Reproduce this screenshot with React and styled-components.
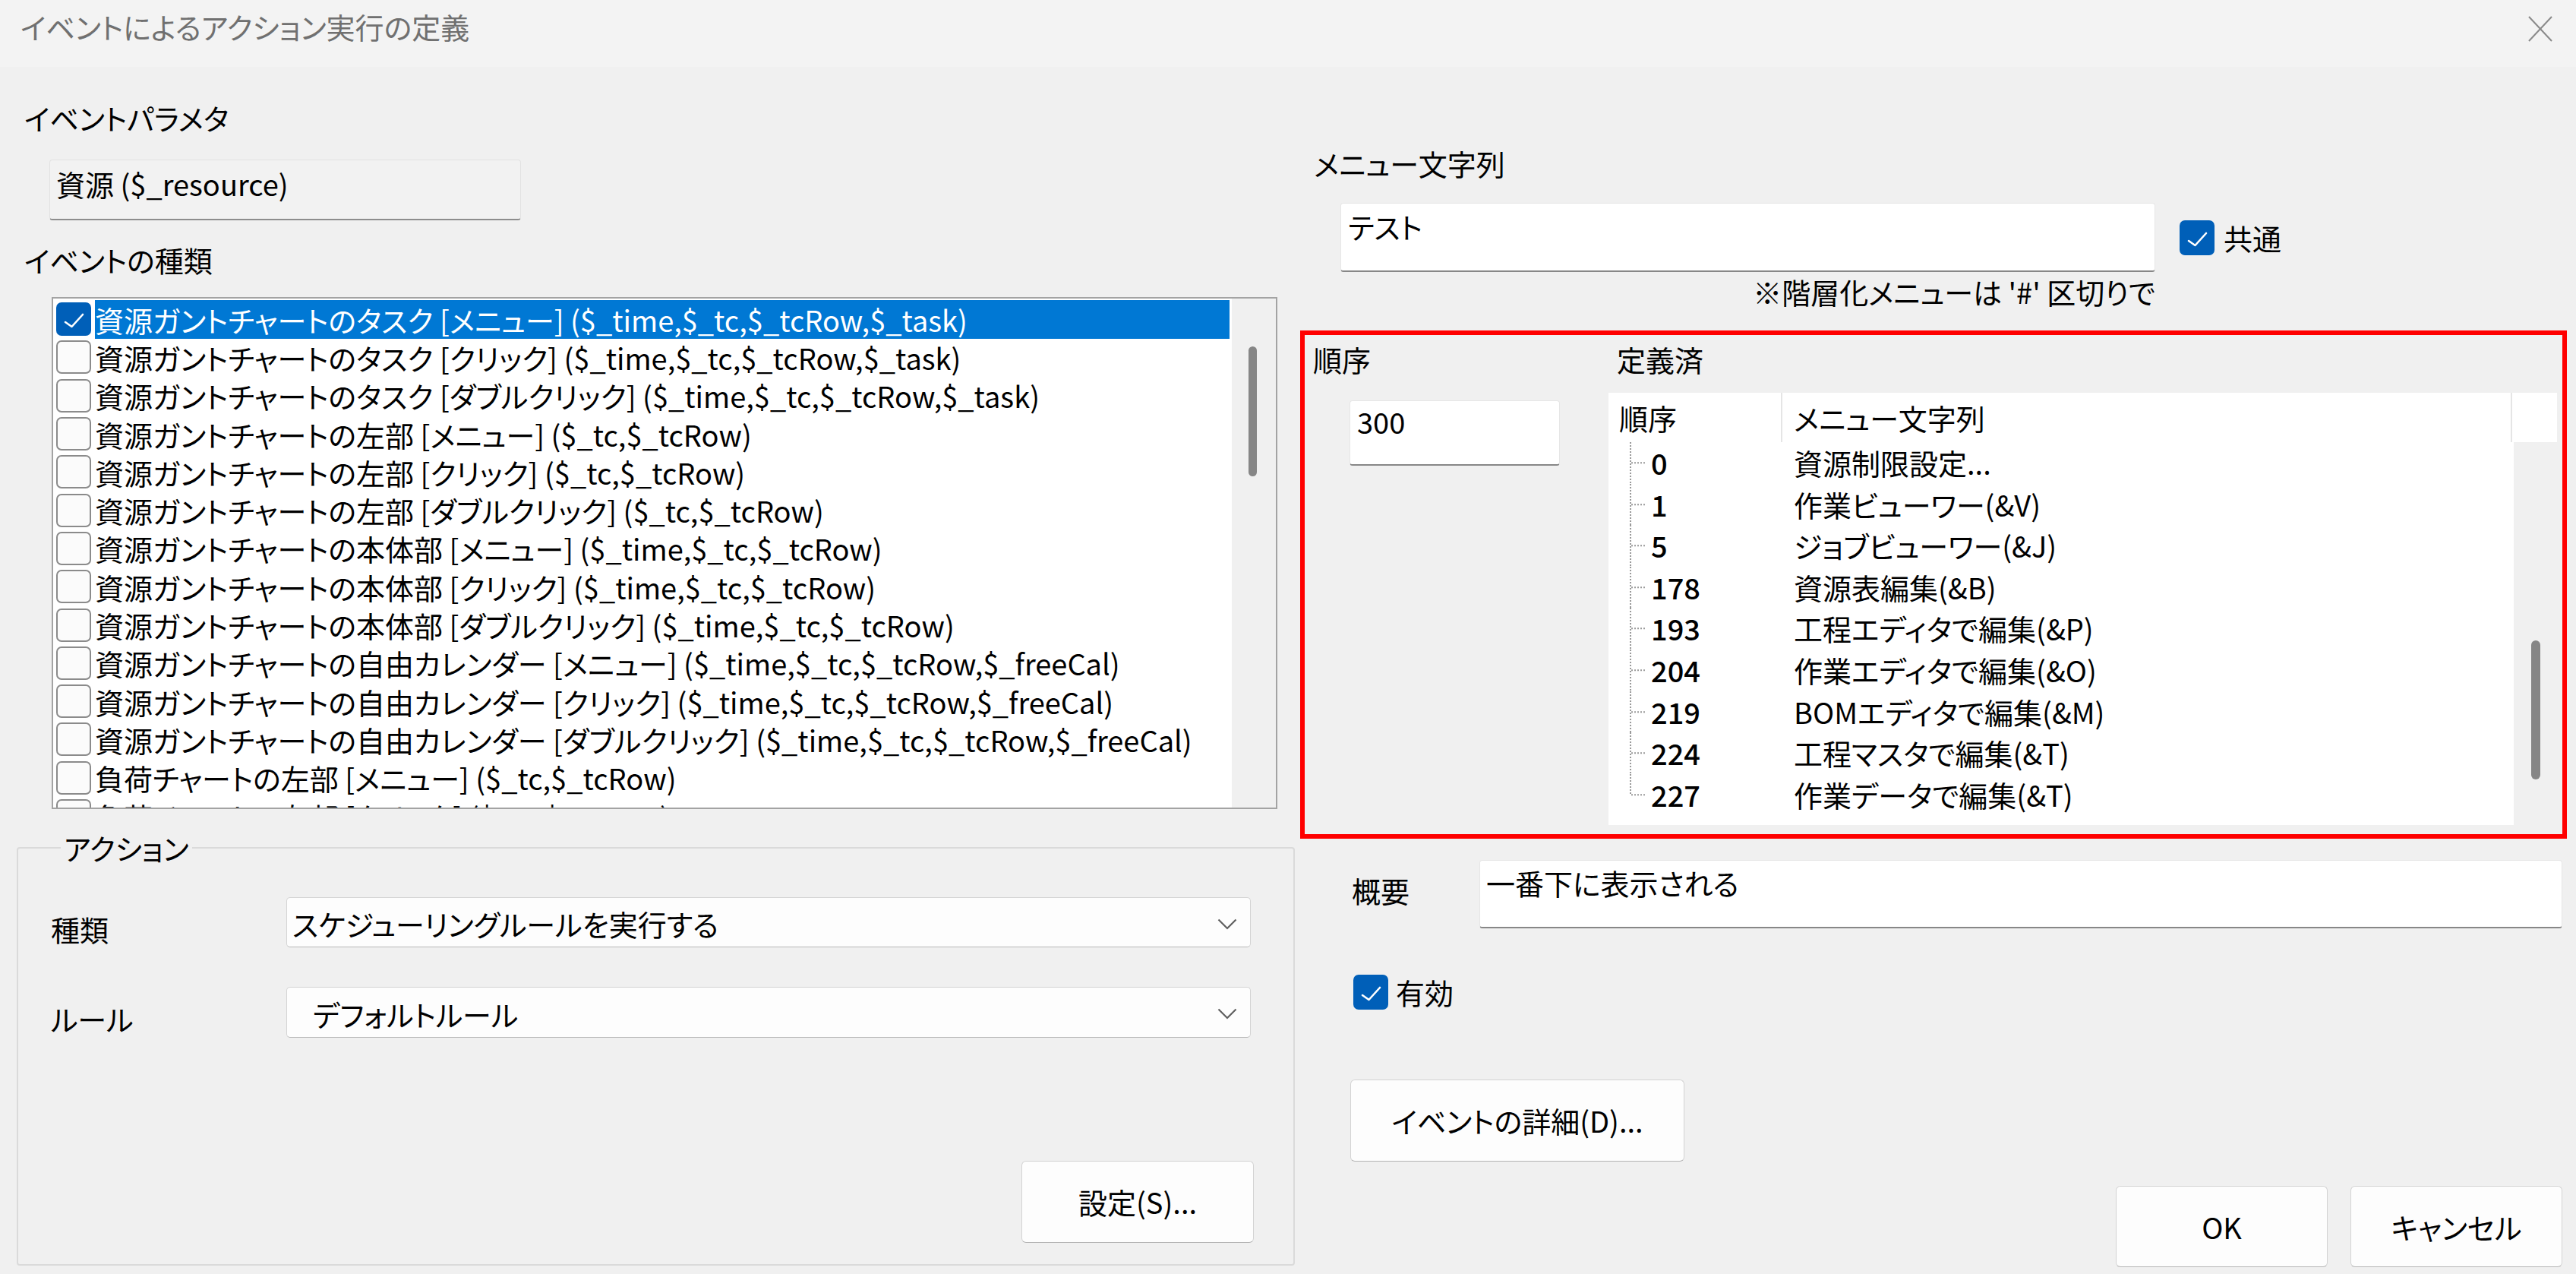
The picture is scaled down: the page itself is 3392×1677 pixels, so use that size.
import React from "react";
import styled, { createGlobalStyle } from "styled-components";

const Global = createGlobalStyle`
  html, body { margin: 0; padding: 0; }
  body {
    background: #f0f0f0;
    font-family: "Noto Sans CJK JP", "Noto Sans", sans-serif;
    font-size: 38px;
    font-feature-settings: "palt";
    color: #000;
  }
  #root { width: 3392px; height: 1677px; overflow: hidden; }
  *, *::before, *::after { box-sizing: border-box; }
`;

const Dialog = styled.div`
  width: 3392px;
  height: 1677px;
  display: flex;
  flex-direction: column;
  background: #f0f0f0;
`;

const TitleBar = styled.div`
  height: 88px;
  flex: none;
  background: #f3f3f3;
  display: flex;
  align-items: flex-start;
  justify-content: space-between;
  padding: 12.5px 30px 0 27px;
`;

const Title = styled.div`
  color: #707070;
  line-height: 44px;
  white-space: nowrap;
`;

const CloseGlyph = styled.svg`
  margin-top: 7.5px;
  flex: none;
`;

const Body = styled.div`
  flex: 1;
  display: grid;
  grid-template-columns: 1705px 1fr;
`;

const Column = styled.div`
  display: flex;
  flex-direction: column;
  align-items: flex-start;
`;

const Label = styled.div`
  line-height: 44px;
  white-space: nowrap;
  margin-top: ${(p) => p.$top || 0}px;
  margin-left: ${(p) => p.$left || 0}px;
`;

const ReadonlyField = styled.div`
  margin-top: 33.5px;
  margin-left: 65px;
  width: 621px;
  height: 80px;
  background: #f2f2f2;
  border: 1px solid #e2e2e2;
  border-bottom: 2px solid #8d8d8d;
  border-radius: 4px;
  padding: 8.5px 8px;
  line-height: 44px;
  white-space: nowrap;
`;

const ListBox = styled.div`
  margin-top: 27.5px;
  margin-left: 68px;
  width: 1614px;
  height: 674px;
  border: 2px solid #a3a3a3;
  display: flex;
  background: #fff;
`;

const ListItems = styled.div`
  flex: 1;
  padding: 2px 3px 0 4px;
  overflow: hidden;
  background: #fff;
`;

const ItemRow = styled.div`
  display: flex;
  align-items: center;
  height: 50.3px;
`;

const Box = styled.div`
  flex: none;
  width: ${(p) => p.$size || 46}px;
  height: ${(p) => p.$h || p.$size || 46}px;
  border-radius: 7px;
  display: flex;
  align-items: center;
  justify-content: center;
  background: ${(p) => (p.$checked ? "#005fb8" : "#fbfbfb")};
  border: ${(p) => (p.$checked ? "none" : "2px solid #8b8b8b")};
`;

const ItemBox = styled(Box)`
  margin-right: 5px;
`;

const ItemText = styled.div`
  flex: 1;
  height: 51px;
  line-height: 51px;
  white-space: nowrap;
  background: ${(p) => (p.$selected ? "#0078d4" : "transparent")};
  color: ${(p) => (p.$selected ? "#fff" : "#000")};
`;

const ScrollTrack = styled.div`
  flex: none;
  width: ${(p) => p.$w}px;
  background: #f0f0f0;
  padding-top: ${(p) => p.$top}px;
  padding-left: ${(p) => p.$left}px;
`;

const ScrollThumb = styled.div`
  width: ${(p) => p.$w}px;
  height: ${(p) => p.$h}px;
  border-radius: 6px;
  background: #868686;
`;

const GroupBox = styled.fieldset`
  margin: 29px 0 0 22px;
  width: 1683px;
  min-width: 0;
  border: 2px solid #dadada;
  border-radius: 4px;
  padding: 43px 52px 28px 43px;
`;

const GroupLegend = styled.legend`
  margin-left: 13px;
  padding: 0 4px;
  line-height: 44px;
`;

const GroupInner = styled.div`
  display: flex;
  flex-direction: column;
`;

const GroupGrid = styled.div`
  display: grid;
  grid-template-columns: 310px 1270px;
  row-gap: 52px;
`;

const GroupLabel = styled.div`
  line-height: 44px;
  margin-top: 20px;
  white-space: nowrap;
`;

const Select = styled.div`
  height: ${(p) => p.$h}px;
  background: #fdfdfd;
  border: 1px solid #d4d4d4;
  border-bottom-color: #b8b8b8;
  border-radius: 5px;
  display: flex;
  align-items: center;
  justify-content: space-between;
  padding: 4px 17px 0 ${(p) => p.$indent}px;
  line-height: 44px;
  white-space: nowrap;
`;

const Button = styled.div`
  flex: none;
  width: ${(p) => p.$w}px;
  height: ${(p) => p.$h}px;
  background: #fdfdfd;
  border: 1px solid #d3d3d3;
  border-bottom-color: #b4b4b4;
  border-radius: 6px;
  display: flex;
  align-items: center;
  justify-content: center;
  line-height: 44px;
  white-space: nowrap;
`;

const SettingsButton = styled(Button)`
  margin-top: 162px;
  align-self: flex-end;
`;

const MenuRow = styled.div`
  display: flex;
  align-items: center;
  margin-top: 30.5px;
  margin-left: 60px;
`;

const TextInput = styled.div`
  flex: none;
  width: ${(p) => p.$w}px;
  height: ${(p) => p.$h}px;
  background: #fff;
  border: 1px solid #e6e6e6;
  border-bottom: 2px solid #878787;
  border-radius: 4px;
  padding: ${(p) => p.$pt}px 9px 0 ${(p) => p.$pl || 9}px;
  line-height: 44px;
  white-space: nowrap;
`;

const CheckLabel = styled.div`
  display: flex;
  align-items: center;
  gap: ${(p) => p.$gap}px;
  margin-left: ${(p) => p.$left}px;
  margin-top: ${(p) => p.$top || 0}px;
  line-height: 44px;
  white-space: nowrap;
`;

const Note = styled.div`
  margin-top: 4px;
  margin-left: 60px;
  width: 1073px;
  text-align: right;
  line-height: 44px;
  white-space: nowrap;
`;

const RedFrame = styled.div`
  margin-top: 29px;
  margin-left: 7px;
  width: 1668px;
  height: 669px;
  border: 6px solid #ff0000;
  display: grid;
  grid-template-columns: 400px 1fr;
  padding: 10px 7px 12px 0;
`;

const FrameCol = styled.div`
  display: flex;
  flex-direction: column;
  align-items: flex-start;
`;

const NumberInput = styled(TextInput)`
  margin-top: 32px;
  margin-left: 59px;
`;

const ListView = styled.div`
  margin-top: 22px;
  width: 1249px;
  height: 569px;
  display: flex;
  flex-direction: column;
`;

const LVHeader = styled.div`
  height: 65px;
  flex: none;
  display: flex;
  background: #fff;
`;

const HeaderCell = styled.div`
  flex: none;
  width: ${(p) => p.$w}px;
  padding-left: ${(p) => p.$pl}px;
  line-height: 65px;
  border-right: 2px solid #e5e5e5;
  white-space: nowrap;
`;

const HeaderFiller = styled.div`
  flex: 1;
`;

const LVBody = styled.div`
  flex: 1;
  display: flex;
  min-height: 0;
`;

const LVRows = styled.div`
  flex: 1;
  background: #fff;
  overflow: hidden;
`;

const LVRow = styled.div`
  display: flex;
  height: 54.6px;
  line-height: 54.6px;
  white-space: nowrap;
`;

const TreeGutter = styled.svg`
  flex: none;
  display: block;
`;

const NumCell = styled.div`
  flex: none;
  width: 171px;
  font-weight: 500;
`;

const TextCell = styled.div`
  flex: 1;
  padding-left: 17px;
`;

const SummaryRow = styled.div`
  display: flex;
  align-items: flex-start;
  margin-top: 28px;
`;

const SummaryLabel = styled.div`
  flex: none;
  width: 243px;
  padding-left: 75px;
  margin-top: 18px;
  line-height: 44px;
`;

const DetailButton = styled(Button)`
  margin-top: 92px;
  margin-left: 73px;
`;

const FooterRow = styled.div`
  margin-top: 32px;
  align-self: stretch;
  display: flex;
  justify-content: flex-end;
  gap: 30px;
  padding-right: 18px;
`;

const Check = () => (
  <svg width="46" height="46" viewBox="0 0 46 46">
    <polyline
      points="12,27 20.5,33 35,17"
      fill="none"
      stroke="#fff"
      strokeWidth="2.6"
      strokeLinecap="round"
      strokeLinejoin="round"
    />
  </svg>
);

const Checkbox = ({ checked, h }) => (
  <Box $checked={checked} $size={46} $h={h}>
    {checked && <Check />}
  </Box>
);

const Chevron = () => (
  <svg width="26" height="15" viewBox="0 0 26 15">
    <polyline
      points="1.5,1.5 13,13 24.5,1.5"
      fill="none"
      stroke="#5f5f5f"
      strokeWidth="2.2"
    />
  </svg>
);

const events = [
  "資源ガントチャートのタスク [メニュー] ($_time,$_tc,$_tcRow,$_task)",
  "資源ガントチャートのタスク [クリック] ($_time,$_tc,$_tcRow,$_task)",
  "資源ガントチャートのタスク [ダブルクリック] ($_time,$_tc,$_tcRow,$_task)",
  "資源ガントチャートの左部 [メニュー] ($_tc,$_tcRow)",
  "資源ガントチャートの左部 [クリック] ($_tc,$_tcRow)",
  "資源ガントチャートの左部 [ダブルクリック] ($_tc,$_tcRow)",
  "資源ガントチャートの本体部 [メニュー] ($_time,$_tc,$_tcRow)",
  "資源ガントチャートの本体部 [クリック] ($_time,$_tc,$_tcRow)",
  "資源ガントチャートの本体部 [ダブルクリック] ($_time,$_tc,$_tcRow)",
  "資源ガントチャートの自由カレンダー [メニュー] ($_time,$_tc,$_tcRow,$_freeCal)",
  "資源ガントチャートの自由カレンダー [クリック] ($_time,$_tc,$_tcRow,$_freeCal)",
  "資源ガントチャートの自由カレンダー [ダブルクリック] ($_time,$_tc,$_tcRow,$_freeCal)",
  "負荷チャートの左部 [メニュー] ($_tc,$_tcRow)",
  "負荷チャートの左部 [クリック] ($_tc,$_tcRow)",
];

const defined = [
  ["0", "資源制限設定..."],
  ["1", "作業ビューワー(&V)"],
  ["5", "ジョブビューワー(&J)"],
  ["178", "資源表編集(&B)"],
  ["193", "工程エディタで編集(&P)"],
  ["204", "作業エディタで編集(&O)"],
  ["219", "BOMエディタで編集(&M)"],
  ["224", "工程マスタで編集(&T)"],
  ["227", "作業データで編集(&T)"],
];

const Tree = ({ last }) => (
  <TreeGutter width="56" height="54.6" viewBox="0 0 56 54.6">
    <line
      x1="29"
      y1="0"
      x2="29"
      y2={last ? 27.3 : 54.6}
      stroke="#9a9a9a"
      strokeWidth="2"
      strokeDasharray="2 2"
    />
    <line
      x1="30"
      y1="27.3"
      x2="50"
      y2="27.3"
      stroke="#9a9a9a"
      strokeWidth="2"
      strokeDasharray="2 2"
    />
  </TreeGutter>
);

export default function App() {
  return (
    <>
      <Global />
      <Dialog>
        <TitleBar>
          <Title>イベントによるアクション実行の定義</Title>
          <CloseGlyph width="34" height="36" viewBox="0 0 34 36">
            <line x1="2" y1="2" x2="32" y2="34" stroke="#8a8a8a" strokeWidth="2" />
            <line x1="32" y1="2" x2="2" y2="34" stroke="#8a8a8a" strokeWidth="2" />
          </CloseGlyph>
        </TitleBar>
        <Body>
          <Column>
            <Label $top={44.5} $left={32}>
              イベントパラメタ
            </Label>
            <ReadonlyField>資源 ($_resource)</ReadonlyField>
            <Label $top={29.5} $left={32}>
              イベントの種類
            </Label>
            <ListBox>
              <ListItems>
                {events.map((t, i) => (
                  <ItemRow key={i}>
                    <ItemBox $checked={i === 0} $size={46} $h={44}>
                      {i === 0 && <Check />}
                    </ItemBox>
                    <ItemText $selected={i === 0}>{t}</ItemText>
                  </ItemRow>
                ))}
              </ListItems>
              <ScrollTrack $w={58} $top={63} $left={22}>
                <ScrollThumb $w={11} $h={171} />
              </ScrollTrack>
            </ListBox>
            <GroupBox>
              <GroupLegend>アクション</GroupLegend>
              <GroupInner>
                <GroupGrid>
                  <GroupLabel>種類</GroupLabel>
                  <Select $h={66} $indent={7}>
                    <span>スケジューリングルールを実行する</span>
                    <Chevron />
                  </Select>
                  <GroupLabel>ルール</GroupLabel>
                  <Select $h={67} $indent={34}>
                    <span>デフォルトルール</span>
                    <Chevron />
                  </Select>
                </GroupGrid>
                <SettingsButton $w={306} $h={108}>
                  設定(S)...
                </SettingsButton>
              </GroupInner>
            </GroupBox>
          </Column>

          <Column>
            <Label $top={104.5} $left={25}>
              メニュー文字列
            </Label>
            <MenuRow>
              <TextInput $w={1073} $h={91} $pt={7.5}>
                テスト
              </TextInput>
              <CheckLabel $gap={12} $left={32}>
                <Checkbox checked />
                <span>共通</span>
              </CheckLabel>
            </MenuRow>
            <Note>※階層化メニューは '#' 区切りで</Note>
            <RedFrame>
              <FrameCol>
                <Label $left={11}>順序</Label>
                <NumberInput $w={277} $h={86} $pt={5}>
                  300
                </NumberInput>
              </FrameCol>
              <FrameCol>
                <Label $left={11}>定義済</Label>
                <ListView>
                  <LVHeader>
                    <HeaderCell $w={229} $pl={14}>
                      順序
                    </HeaderCell>
                    <HeaderCell $w={961} $pl={15}>
                      メニュー文字列
                    </HeaderCell>
                    <HeaderFiller />
                  </LVHeader>
                  <LVBody>
                    <LVRows>
                      {defined.map(([n, t], i) => (
                        <LVRow key={n}>
                          <Tree last={i === defined.length - 1} />
                          <NumCell>{n}</NumCell>
                          <TextCell>{t}</TextCell>
                        </LVRow>
                      ))}
                    </LVRows>
                    <ScrollTrack $w={57} $top={261} $left={23}>
                      <ScrollThumb $w={12} $h={183} />
                    </ScrollTrack>
                  </LVBody>
                </ListView>
              </FrameCol>
            </RedFrame>
            <SummaryRow>
              <SummaryLabel>概要</SummaryLabel>
              <TextInput $w={1426} $h={90} $pt={7} $pl={8}>
                一番下に表示される
              </TextInput>
            </SummaryRow>
            <CheckLabel $gap={10} $left={77} $top={61}>
              <Checkbox checked />
              <span>有効</span>
            </CheckLabel>
            <DetailButton $w={440} $h={108}>
              イベントの詳細(D)...
            </DetailButton>
            <FooterRow>
              <Button $w={279} $h={107}>
                OK
              </Button>
              <Button $w={279} $h={107}>
                キャンセル
              </Button>
            </FooterRow>
          </Column>
        </Body>
      </Dialog>
    </>
  );
}
